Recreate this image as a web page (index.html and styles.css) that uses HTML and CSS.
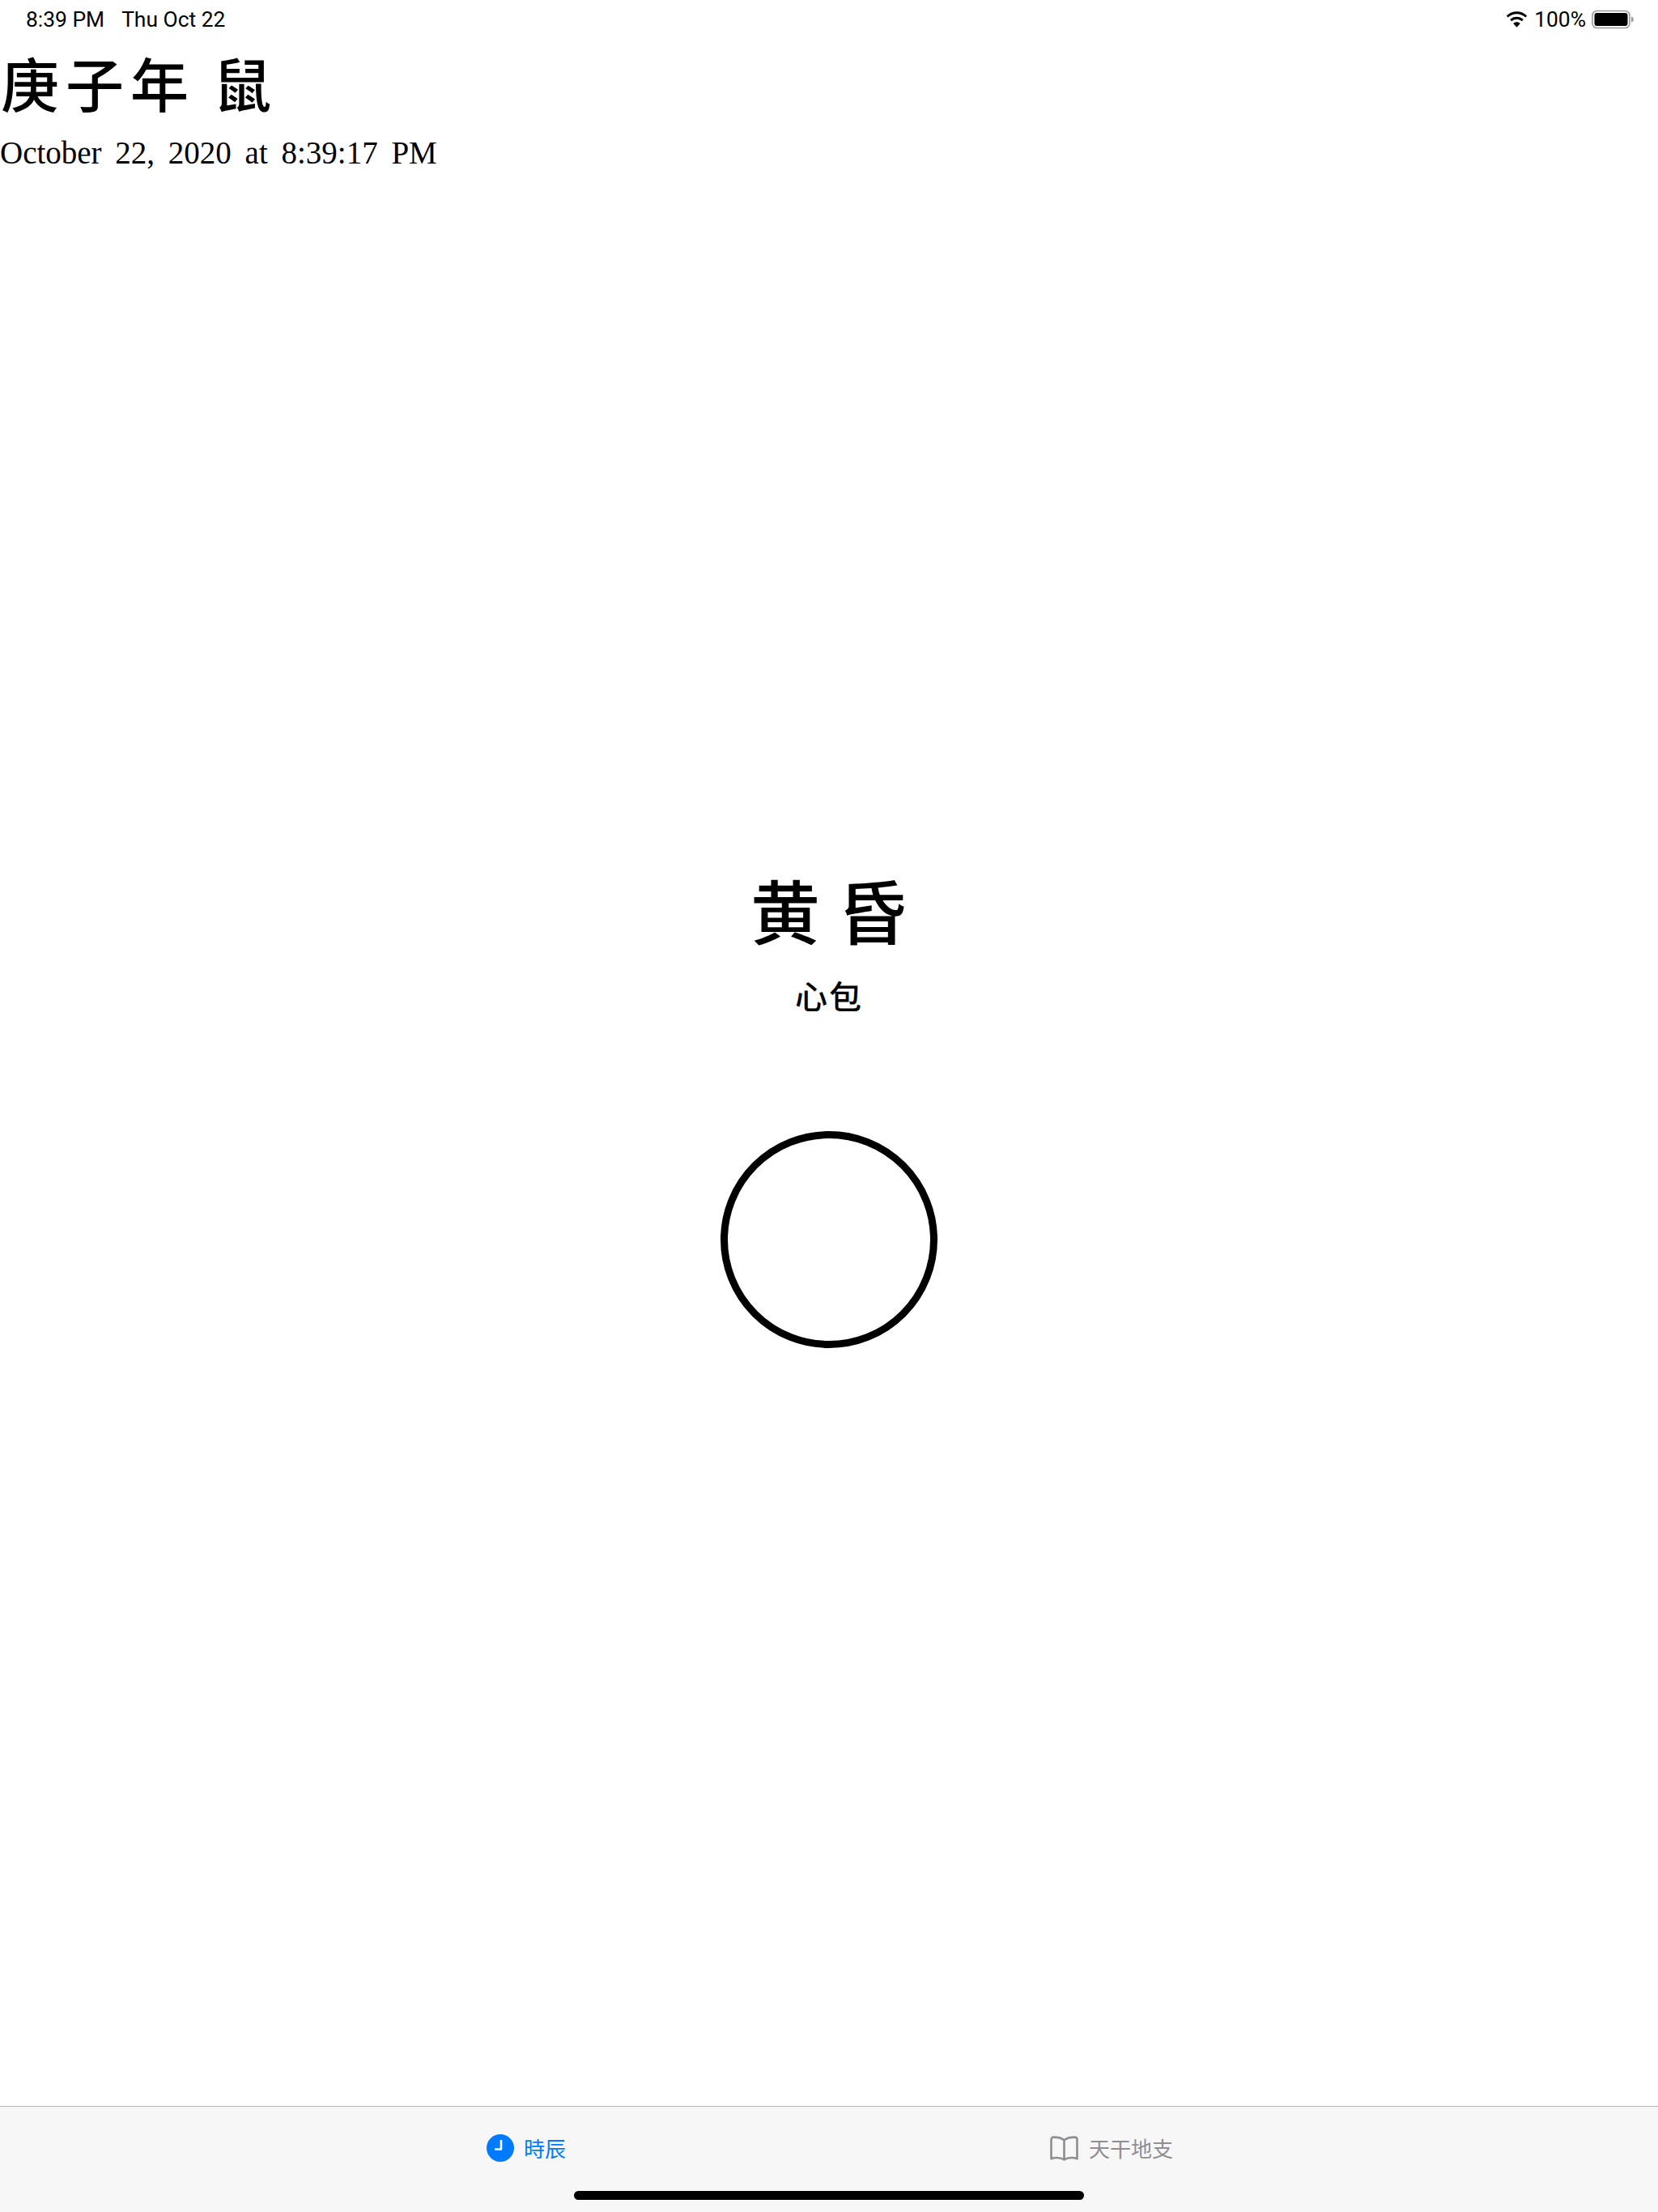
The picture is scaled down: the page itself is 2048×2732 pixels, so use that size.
FILE: index.html
```html
<!DOCTYPE html>
<html lang="zh">
<head>
<meta charset="utf-8">
<title>時辰</title>
<link rel="stylesheet" href="styles.css">
</head>
<body>
<div class="page">
  <header class="status">
    <div class="status-left"><span>8:39 PM</span><span>Thu Oct 22</span></div>
    <div class="status-right">
      <svg class="wifi" width="29" height="21" viewBox="0 0 28 21"><path d="M14 3.2c4.2 0 8 1.600 10.800 4.300l1.900-2.100C23.300 2.100 18.900.2 14 .2S4.700 2.100 1.300 5.400l1.900 2.100C6 4.800 9.800 3.200 14 3.200zM14 9.700c2.400 0 4.600.9 6.300 2.500l2-2.100C20.100 8 17.200 6.800 14 6.800S7.900 8 5.700 10.100l2 2.100c1.700-1.600 3.900-2.500 6.300-2.500zM14 13.200c-1.700 0-3.200.7-4.300 1.700L14 19.700l4.300-4.800c-1.100-1-2.600-1.700-4.300-1.700z" fill="#000"/></svg>
      <span>100%</span>
      <svg class="battery" width="52" height="24" viewBox="0 0 52 24"><rect x="1" y="1.500" width="46" height="21" rx="5.500" fill="none" stroke="#9a9a9a" stroke-width="1.600"/><rect x="3.500" y="4" width="41" height="16" rx="3" fill="#000"/><path d="M49 8.500c1.700.5 2.800 1.900 2.800 3.500s-1.100 3-2.800 3.500z" fill="#9a9a9a"/></svg>
    </div>
  </header>
  <h1 class="year">庚子年 鼠</h1>
  <p class="date">October 22, 2020 at 8:39:17 PM</p>
  <main class="center">
    <div class="period">黄昏</div>
    <div class="organ">心包</div>
    <div class="ring"></div>
  </main>
  <nav class="tabbar">
    <div class="tabs">
      <div class="tab tab-active">
        <svg width="34" height="34" viewBox="0 0 34 34"><circle cx="17" cy="17" r="17" fill="#007aff"/><path d="M18 7v11.500h-8" fill="none" stroke="#fff" stroke-width="2.600" stroke-linejoin="round"/></svg>
        <span>時辰</span>
      </div>
      <div class="tab">
        <svg width="37" height="31" viewBox="0 0 36 31"><path d="M18 5.500C15.500 2.800 11 1.600 5 1.600 3.200 1.600 2 2.800 2 4.600v23.600c3-1.300 11-2.300 16 1.300 5-3.600 13-2.600 16-1.300V4.600c0-1.800-1.200-3-3-3-6 0-10.500 1.200-13 3.900zM18 5.500v24" fill="none" stroke="#8e8e93" stroke-width="2.600" stroke-linejoin="round"/></svg>
        <span>天干地支</span>
      </div>
    </div>
    <div class="home"></div>
  </nav>
</div>
</body>
</html>
```

FILE: styles.css
```css
* { box-sizing: border-box; }
html, body { margin: 0; padding: 0; background: #fff; }
.page {
  width: 2048px;
  height: 2732px;
  display: flex;
  flex-direction: column;
  color: #000;
  overflow: hidden;
}
.status {
  height: 48px;
  padding: 0 30px 0 32px;
  display: flex;
  justify-content: space-between;
  align-items: center;
  font: 400 26.4px/30px Roboto, sans-serif;
}
.status-left { display: flex; gap: 21px; }
.status-right { display: flex; align-items: center; gap: 7px; }
.year {
  margin: 10px 0 0;
  padding-left: 1px;
  height: 86px;
  font: 500 72px/86px "Noto Sans CJK TC", sans-serif;
  letter-spacing: 8px;
  word-spacing: -2px;
}
.date {
  margin: 22px 0 0;
  font: 400 39px/46px "Liberation Serif", serif;
  word-spacing: 7px;
}
.center {
  flex: 1;
  display: flex;
  flex-direction: column;
  align-items: center;
  padding-top: 861px;
}
.period {
  font: 500 86px/100px "Noto Sans CJK SC", sans-serif;
  letter-spacing: 22px;
  margin-right: -22px;
}
.organ {
  margin-top: 31px;
  font: 500 40px/50px "Noto Sans CJK SC", sans-serif;
  letter-spacing: 2px;
}
.ring {
  margin-top: 143px;
  width: 268px;
  height: 268px;
  border: 9px solid #000;
  border-radius: 50%;
}
.tabbar {
  height: 131px;
  background: #f7f7f7;
  border-top: 1px solid #b4b4b4;
  display: flex;
  flex-direction: column;
  align-items: center;
}
.tabs {
  width: 100%;
  padding-top: 33px;
  height: 104px;
  display: flex;
  justify-content: space-between;
  padding-left: 601px;
  padding-right: 599px;
}
.tab {
  display: flex;
  align-items: center;
  gap: 12px;
  height: 36px;
  color: #8e8e93;
  font: 400 26px/36px "Noto Sans CJK TC", sans-serif;
}
.tab-active { color: #007aff; }
.home {
  width: 630px;
  height: 11px;
  border-radius: 6px;
  background: #000;
}
```
